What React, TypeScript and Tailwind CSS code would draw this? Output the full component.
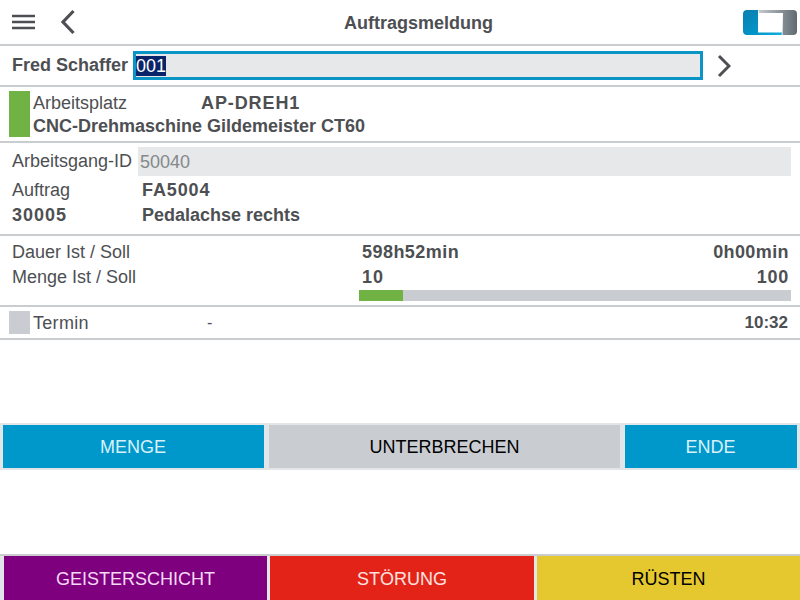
const font = { fontFamily: '"Liberation Sans", Arial, sans-serif' };

function Logo() {
  return (
    <svg width="55" height="26" viewBox="0 0 55 26" fill="none">
      <defs>
        <linearGradient id="lb" x1="0" y1="0" x2="1" y2="1">
          <stop offset="0" stopColor="#0a7fb0" />
          <stop offset="0.6" stopColor="#0394c8" />
          <stop offset="1" stopColor="#12b0de" />
        </linearGradient>
        <linearGradient id="lg" x1="0" y1="0" x2="1" y2="0">
          <stop offset="0" stopColor="#c4c9cd" />
          <stop offset="1" stopColor="#5f6a72" />
        </linearGradient>
      </defs>
      <path d="M4 0H15V22.5H39L38.5 25H4C1.5 25 0 23.5 0 21V4C0 1.5 1.5 0 4 0Z" fill="url(#lb)" />
      <path d="M15.5 0H50C53 0 54 1.5 54 4V21C54 23.5 53 25 50 25H39.5L40 3H16Z" fill="url(#lg)" />
    </svg>
  );
}

function Divider() {
  return <div className="h-[2px] shrink-0 bg-[#c9cdd0]" />;
}

function Action({ label, className }: { label: string; className: string }) {
  return (
    <button className={`flex items-center justify-center text-[18px] ${className}`}>{label}</button>
  );
}

export default function App() {
  return (
    <div style={font} className="w-[800px] h-[600px] overflow-hidden bg-white flex flex-col text-[#4d4f53]">
      <header className="h-[44px] shrink-0 flex items-center">
        <svg className="ml-[12px]" width="23" height="16" viewBox="0 0 23 16">
          <path d="M0 2h23M0 8h23M0 14h23" stroke="#4d4f53" strokeWidth="2.6" />
        </svg>
        <svg className="ml-[25px]" width="16" height="26" viewBox="0 0 16 26" fill="none">
          <path d="M13.5 2L3 13l10.5 11" stroke="#4d4f53" strokeWidth="3.2" />
        </svg>
        <h1 className="flex-1 text-center text-[18px] font-bold ml-[18px] pt-[3px]">Auftragsmeldung</h1>
        <div className="mr-[2px] mt-[1px]"><Logo /></div>
      </header>
      <Divider />
      <div className="h-[39px] shrink-0 flex items-center">
        <span className="ml-[12px] w-[121px] text-[18px] font-bold whitespace-nowrap">Fred Schaffer</span>
        <div className="w-[570px] h-[29px] border-[3px] border-[#0b94c6] bg-[#e6e8ea] flex items-center text-[18px]">
          <span className="bg-[#0a246a] text-white leading-[20px] h-[20px]">001</span>
        </div>
        <svg className="ml-[14px]" width="14" height="24" viewBox="0 0 14 24" fill="none">
          <path d="M2 2l10 10L2 22" stroke="#4d4f53" strokeWidth="3" />
        </svg>
      </div>
      <Divider />
      <div className="h-[54px] shrink-0 flex pl-[9px] pt-[4px]">
        <div className="w-[21px] h-[46px] bg-[#71b244]" />
        <div className="ml-[3px] flex flex-col text-[18px] pt-[1px]">
          <div className="flex h-[23px] items-center">
            <span className="w-[168px]">Arbeitsplatz</span>
            <span className="font-bold tracking-[0.9px]">AP-DREH1</span>
          </div>
          <div className="h-[23px] flex items-center font-bold whitespace-nowrap">CNC-Drehmaschine Gildemeister CT60</div>
        </div>
      </div>
      <Divider />
      <div className="h-[91px] shrink-0 flex flex-col pl-[12px] pr-[9px] pt-[4px] text-[18px]">
        <div className="flex h-[29px] items-center">
          <span className="w-[126px] whitespace-nowrap">Arbeitsgang-ID</span>
          <div className="flex-1 h-[29px] bg-[#e6e8ea] text-[#85888b] flex items-center pl-[2px] pt-[1px]">50040</div>
        </div>
        <div className="flex h-[25px] items-center pt-[3px]">
          <span className="w-[130px]">Auftrag</span>
          <span className="font-bold tracking-[0.9px]">FA5004</span>
        </div>
        <div className="flex h-[25px] items-center font-bold pt-[3px]">
          <span className="w-[130px] tracking-[1px]">30005</span>
          <span>Pedalachse rechts</span>
        </div>
      </div>
      <Divider />
      <div className="h-[69px] shrink-0 flex pl-[12px] pr-[9px] pt-[4px] text-[18px]">
        <div className="w-[347px] flex flex-col">
          <div className="h-[25px] flex items-center">Dauer Ist / Soll</div>
          <div className="h-[25px] flex items-center">Menge Ist / Soll</div>
        </div>
        <div className="flex-1 flex flex-col font-bold">
          <div className="h-[25px] flex items-center justify-between pl-[3px] pr-[2px]">
            <span className="tracking-[0.45px]">598h52min</span>
            <span className="tracking-[0.4px]">0h00min</span>
          </div>
          <div className="h-[25px] flex items-center justify-between pl-[3px] pr-[2px]">
            <span className="tracking-[1px]">10</span>
            <span className="tracking-[0.7px]">100</span>
          </div>
          <div className="h-[11px] bg-[#c9cdd2]">
            <div className="h-full w-[44px] bg-[#71b244]" />
          </div>
        </div>
      </div>
      <Divider />
      <div className="h-[31px] shrink-0 flex items-center pl-[9px] pr-[12px] text-[18px]">
        <div className="w-[21px] h-[23px] bg-[#c9cdd2]" />
        <span className="ml-[3px] w-[174px] tracking-[0.3px] pt-[2px]">Termin</span>
        <span className="flex-1 text-[16px]">-</span>
        <span className="text-[17px] font-bold">10:32</span>
      </div>
      <Divider />
      <div className="flex-1" />
      <div className="h-[47px] shrink-0 bg-[#e2e6e9] flex gap-[5px] pl-[3px] pr-[3px] py-[2px]">
        <Action label="MENGE" className="w-[261px] bg-[#0098cb] text-[#d9f1fa] pt-[1px] pr-[1px]" />
        <Action label="UNTERBRECHEN" className="w-[351px] bg-[#c9cdd1] text-black pt-[1px]" />
        <Action label="ENDE" className="w-[172px] bg-[#0098cb] text-[#d9f1fa] pt-[1px] pr-[1px]" />
      </div>
      <div className="h-[84px] shrink-0" />
      <Divider />
      <div className="h-[44px] shrink-0 flex gap-[3px] pl-[4px] bg-[#e2e6e9]">
        <Action label="GEISTERSCHICHT" className="w-[263px] bg-[#7f007f] text-[#f5d9f5] pt-[3px]" />
        <Action label="STÖRUNG" className="w-[264px] bg-[#e42318] text-[#fde3e0] pt-[3px]" />
        <Action label="RÜSTEN" className="flex-1 bg-[#e5c82f] text-black pt-[3px]" />
      </div>
    </div>
  );
}
